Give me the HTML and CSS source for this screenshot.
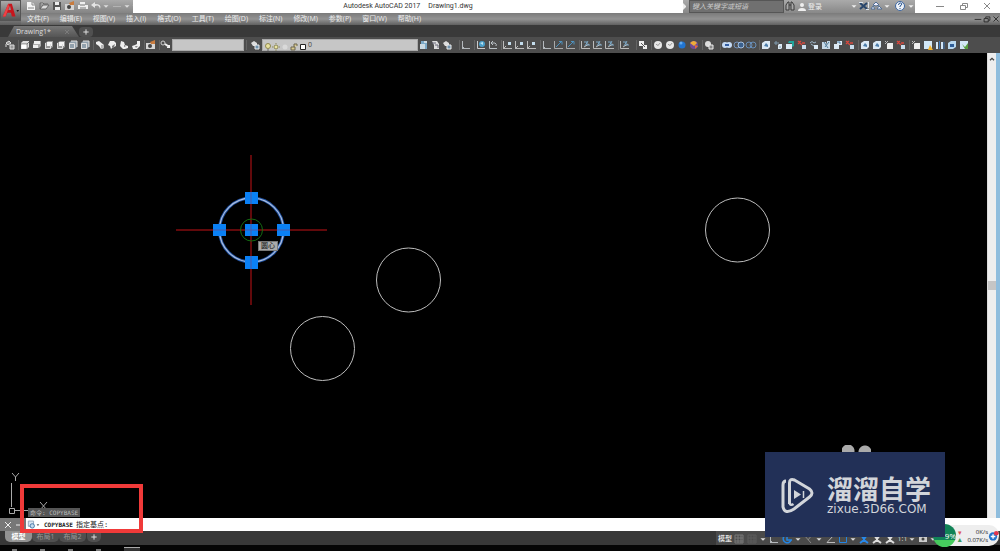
FILE: index.html
```html
<!DOCTYPE html>
<html lang="zh-CN">
<head>
<meta charset="utf-8">
<title>Autodesk AutoCAD 2017 Drawing1.dwg</title>
<link rel="stylesheet" href="styles.css">
</head>
<body>
<svg class="defs" aria-hidden="true">
  <symbol id="named" viewBox="0 0 12 12"><path d="M2 4l3-2 2 2-3 2zM2 5v3M6 6h4v4H6z" fill="#999" stroke="#ddd"/></symbol>
  <symbol id="boxtop" viewBox="0 0 12 12"><path d="M2 4l2-2h6v6l-2 2H2z" fill="#ddd"/><path d="M2 5h6v5M8 5l2-2" stroke="#777" fill="none"/><path d="M2.500 5.500h5v4h-5z" fill="#fff"/></symbol>
  <symbol id="boxopen" viewBox="0 0 12 12"><path d="M2 5l2-3h6v5L8 9H2z" fill="#aaa"/><path d="M3 2h6v3H3zM2 6h5v3H2z" fill="#eee"/></symbol>
  <symbol id="boxside" viewBox="0 0 12 12"><path d="M2 4l3-2h5v6l-3 2H2z" fill="#999"/><path d="M4 3h5v4H4z" fill="#f4f4f4"/><path d="M2.500 4v5.500h5V5" stroke="#ddd" fill="none"/></symbol>
  <symbol id="boxback" viewBox="0 0 12 12"><path d="M2 4l2-2h6v6l-2 2H2z" fill="#91a0ac"/><path d="M2.500 4.500h5v5h-5zM4 2h6v6" stroke="#ddd" fill="none"/></symbol>
  <symbol id="iso1" viewBox="0 0 12 12"><path d="M2 3l3-1 5 4v3l-3 1-2-3-3-2z" fill="#eee"/><path d="M7 6l3 0v3l-3 1z" fill="#b5b5b5"/></symbol>
  <symbol id="iso2" viewBox="0 0 12 12"><path d="M2 6l2-4 4 0 2 2v3l-4 2-1 1-1-3z" fill="#eee"/><path d="M6 7l3-2-1 3-2 1z" fill="#777"/></symbol>
  <symbol id="iso3" viewBox="0 0 12 12"><path d="M3 2l3 1 1 3 3 1v2L7 10H5L2 7z" fill="#eee"/><path d="M6 6l2 1-2 1z" fill="#777"/></symbol>
  <symbol id="iso4" viewBox="0 0 12 12"><path d="M7 2h3v5l-3 3H3L2 7l3-1 2-1z" fill="#eee"/><path d="M5 7h3L6 9z" fill="#888"/></symbol>
  <symbol id="camera" viewBox="0 0 12 12"><path d="M1 4h9v6H1z" fill="#d5d5d5"/><circle cx="5" cy="7" r="2" fill="#444"/><path d="M5 3l5-2v4H6z" fill="#c87b3e"/></symbol>
  <symbol id="key" viewBox="0 0 12 12"><circle cx="3" cy="4" r="2" fill="none" stroke="#ccc"/><path d="M5 5l3 2h2M7 8h3" stroke="#eee" stroke-width="2"/></symbol>
  <symbol id="layers" viewBox="0 0 12 12"><path d="M1 4l3-2 3 2v3H3z" fill="#ddd"/><path d="M5 6h4v4H5z" fill="#6f91ac" stroke="#eee"/></symbol>
  <symbol id="layer2" viewBox="0 0 12 12"><path d="M3 2h4l2 2v6H3z" fill="#7ba8c6"/><path d="M2 5h5v5H2zM6 2h3v2H6z" fill="#cbd9e1"/></symbol>
  <symbol id="layer3" viewBox="0 0 12 12"><path d="M2 2h5l2 3v5H4V6z" fill="#ddd"/><path d="M2 4h4M5 6h3v3" stroke="#667" fill="none"/></symbol>
  <symbol id="ucs" viewBox="0 0 12 12"><path d="M2.500 2v7.500H10M2 10l2-2" stroke="#b4b9bd" fill="none"/></symbol>
  <symbol id="ucsw" viewBox="0 0 12 12"><path d="M2.500 2v7.500H10" stroke="#ccc" fill="none"/><circle cx="7" cy="5" r="3" fill="#4a9fca"/><path d="M5 4l3-1v3z" fill="#bde2ee"/></symbol>
  <symbol id="ucsp" viewBox="0 0 12 12"><path d="M2.500 2v7.500H10M4 4h4q2 1 1 3M4 4l2-2M4 4l2 2" stroke="#bbc2c7" fill="none"/></symbol>
  <symbol id="ucsd" viewBox="0 0 12 12"><path d="M1.500 2v7.500H10M1 10l3-3" stroke="#bbb" fill="none"/><path d="M6 3h3v3H6z" fill="#c3dcec"/></symbol>
  <symbol id="ucsz" viewBox="0 0 12 12"><path d="M1.500 2v7.500H10" stroke="#aaa" fill="none"/><path d="M3 8l6-6M6 2.500h3v3" stroke="#4e91bd" fill="none"/></symbol>
  <symbol id="ucsr" viewBox="0 0 12 12"><path d="M1.500 2v7.500H10M4 8l5-3" stroke="#bbb" fill="none"/><path d="M4 3h3v3h3M8 2l-3 5" stroke="#7ba6c4" fill="none"/></symbol>
  <symbol id="squares" viewBox="0 0 12 12"><path d="M2 2h5v5H2zM6 6h4v4H6z" fill="#eee"/><path d="M4 4l4 4M7 3l2 2" stroke="#555"/></symbol>
  <symbol id="sphere" viewBox="0 0 12 12"><circle cx="6" cy="6" r="4" fill="#e8e8e8"/><path d="M4 5q2 3 4-1" stroke="#999" fill="none"/></symbol>
  <symbol id="bsphere" viewBox="0 0 12 12"><circle cx="6" cy="6" r="3.500" fill="#2175d1"/><circle cx="5" cy="4" r="1.500" fill="#62aaf0"/></symbol>
  <symbol id="csphere" viewBox="0 0 12 12"><circle cx="6" cy="6" r="4" fill="#704b98"/><path d="M2 4q4-4 7 0L6 7z" fill="#efad38"/><path d="M7 6l3 1-3 3z" fill="#e56c36"/></symbol>
  <symbol id="vs" viewBox="0 0 12 12"><circle cx="5" cy="5" r="3" fill="#ddd"/><path d="M6 6h4v4H6z" fill="#888" stroke="#eee"/></symbol>
  <symbol id="union" viewBox="0 0 12 12"><circle cx="4" cy="6" r="3" fill="#c5dbf6"/><circle cx="8" cy="6" r="3" fill="#c5dbf6"/><path d="M4 6h4" stroke="#345ea2" stroke-width="2"/></symbol>
  <symbol id="subtract" viewBox="0 0 12 12"><circle cx="4" cy="6" r="3" fill="none" stroke="#7292bd"/><circle cx="8" cy="6" r="3" fill="#3a608d" stroke="#a7c0de"/></symbol>
  <symbol id="intersect" viewBox="0 0 12 12"><circle cx="4" cy="6" r="3" fill="none" stroke="#688eb8"/><circle cx="8" cy="6" r="3" fill="none" stroke="#688eb8"/></symbol>
  <symbol id="solid" viewBox="0 0 12 12"><path d="M2 4l3-2h5v6l-2 2H2z" fill="#dceaf5"/><path d="M4 7l2-3 2 2v2z" fill="#4e7fac"/></symbol>
  <symbol id="move" viewBox="0 0 12 12"><path d="M6 6l1-1h3v4l-1 1H6z" fill="#dceaf5"/><path d="M2 4h5M4 2v4M7 8h2" stroke="#809cb0"/></symbol>
  <symbol id="teal" viewBox="0 0 12 12"><path d="M2 5h6v5H2z" fill="#dceaf5"/><path d="M5 2h5v5L8 8V4H4z" fill="#21a69c"/></symbol>
  <symbol id="redface" viewBox="0 0 12 12"><path d="M6 6h4v4H6z" fill="#c8dcec"/><path d="M2 2l4 4M5 2L2 5M6 4h3" stroke="#d8483e" stroke-width="1.300"/></symbol>
  <symbol id="rotate" viewBox="0 0 12 12"><path d="M6 6h4v4H6z" fill="#dceaf5"/><path d="M2 4q2-3 4 0l2-1M3 5l3 2" stroke="#9db7c9" fill="none"/></symbol>
  <symbol id="taper" viewBox="0 0 12 12"><path d="M2 3h4l1 3V2h3v8H2z" fill="#c9dbe8"/><path d="M4 3l4 6M5 8l4-5" stroke="#537e9d"/></symbol>
  <symbol id="copy" viewBox="0 0 12 12"><path d="M5 2h5v4H5zM2 5h5v5H2z" fill="#dceaf5"/><path d="M5 3h3v2" stroke="#47799f" fill="none"/></symbol>
  <symbol id="imprint" viewBox="0 0 12 12"><path d="M4 4h6v6H4z" fill="#eee"/><path d="M2 2l3 3M2 5l3-3" stroke="#bbb"/></symbol>
  <symbol id="warning" viewBox="0 0 12 12"><path d="M2 2h8v8H2z" fill="#d3e8f7"/><path d="M8 6l3 5H6z" fill="#f2b22d"/></symbol>
  <symbol id="split" viewBox="0 0 12 12"><path d="M2 3h2v7H2zM7 3h2v7H7z" fill="#d2e6f6"/><path d="M5.500 2v8M10 3v7" stroke="#3f76b3"/></symbol>
  <symbol id="shell" viewBox="0 0 12 12"><path d="M2 4l3-2h5v6l-3 2H2z" fill="#b8d8ef"/><path d="M4 5h4v3H4z" fill="#2f5e98"/></symbol>
  <symbol id="check" viewBox="0 0 12 12"><path d="M2 2h8v8H2z" fill="#d3e8f7"/><path d="M4 5l3 3 3-4v6H7z" fill="#579f3f"/></symbol>
  <symbol id="new" viewBox="0 0 12 12"><path d="M2 2h5l3 3v5H2z" fill="#f5f5f5"/><path d="M7 2v3h3M3 8h6" stroke="#888" fill="none"/></symbol>
  <symbol id="open" viewBox="0 0 12 12"><path d="M2 3h3l1 1h4M2 3v6h6l3-4H5L2 9" fill="#ddd" stroke="#666"/></symbol>
  <symbol id="save" viewBox="0 0 12 12"><path d="M2 2h8v8H2z" fill="#555"/><path d="M4 2h4v3H4zM4 7h5v3H4z" fill="#eee"/></symbol>
  <symbol id="print" viewBox="0 0 12 12"><path d="M3 2h5v3h3v4H1V5h2z" fill="#eee"/><path d="M3 5h5M3 8h6" stroke="#777"/></symbol>
  <symbol id="undo" viewBox="0 0 12 12"><path d="M5 2L1 5l4 3V6q4-2 5 3 2-5-5-5z" fill="#e4e4e4"/></symbol>
  <symbol id="minus" viewBox="0 0 12 12"><path d="M2 6.500h8" stroke="currentColor"/></symbol>
  <symbol id="restore" viewBox="0 0 12 12"><path d="M2.500 5.500h5v4h-5zM4.500 5V3.500h5v4H8" stroke="currentColor" fill="none"/></symbol>
  <symbol id="close" viewBox="0 0 12 12"><path d="M3 3l6 6M9 3l-6 6" stroke="currentColor"/></symbol>
  <symbol id="plus" viewBox="0 0 12 12"><path d="M6 2v8M2 6h8" stroke="currentColor" stroke-width="1.500"/></symbol>
  <symbol id="wrench" viewBox="0 0 12 12"><path d="M2 6h5M7 3l3 3-3 3z" stroke="currentColor" fill="currentColor"/></symbol>
  <symbol id="down" viewBox="0 0 12 12"><path d="M3 5h6L6 8z" fill="currentColor"/></symbol>
  <symbol id="binoc" viewBox="0 0 12 12"><path d="M2 10V5l2-3h1v8zM7 10V2h1l2 3v5zM5 5h2" stroke="#3b3b3b" fill="#aaa"/></symbol>
  <symbol id="user" viewBox="0 0 12 12"><circle cx="6" cy="4" r="2" fill="#eee"/><path d="M2 10q0-3 4-3t4 3z" fill="#eee"/></symbol>
  <symbol id="exch" viewBox="0 0 12 12"><path d="M2 3l7 6M9 3L2 9" stroke="#27456c" stroke-width="2"/><path d="M1 2.500h4M8 9.500h3M10.500 2v6" stroke="#dce4ed"/></symbol>
  <symbol id="a360" viewBox="0 0 12 12"><path d="M6 2l3 3-3 1-3-1zM1 9l2-3 2 3zM7 9l2-3 3 3z" fill="#eef" stroke="#506f94"/></symbol>
  <symbol id="help" viewBox="0 0 12 12"><circle cx="6" cy="6" r="4.500" fill="#eef2f8" stroke="#3d66a0"/><path d="M4.500 5q0-2 2-2t1 2L6 6v1M6 8v1" stroke="#29558e" fill="none"/></symbol>
  <symbol id="grid" viewBox="0 0 12 12"><path d="M2 2h8v8H2zM5 2v8M8 2v8M2 5h8M2 8h8" stroke="#797979" fill="none"/></symbol>
  <symbol id="polar" viewBox="0 0 12 12"><path d="M9 3a4 4 0 1 0 1 4M6 2v5h5" stroke="#2385e4" stroke-width="1.500" fill="none"/></symbol>
  <symbol id="angle" viewBox="0 0 12 12"><path d="M10 2L3 9.500h8" stroke="#bbb" fill="none"/></symbol>
  <symbol id="iso" viewBox="0 0 12 12"><path d="M2 2l7 8M6 7l4-5" stroke="#888"/></symbol>
  <symbol id="osnap" viewBox="0 0 12 12"><path d="M2.500 3.500h7v6h-7z" stroke="#2385e4" fill="none"/></symbol>
  <symbol id="person" viewBox="0 0 12 12"><path d="M3 2l3 4 3-4M6 5v2l4 3M6 7l-4 3" stroke="currentColor" stroke-width="2" fill="none"/></symbol>
  <symbol id="gear" viewBox="0 0 12 12"><path d="M2 3h8v6H2z" fill="#ccc"/><circle cx="6" cy="6" r="1.500" fill="#444"/></symbol>
</svg>

<div class="app">
  <header class="top">
    <button class="logo" aria-label="AutoCAD"><svg viewBox="0 0 21 20"><path d="M2 16L8 2h4l4 14h-4l-1-4H7l-2 4z" fill="#c6161d"/><path d="M8 9l2-5 1 5z" fill="#8a8a8a"/><path d="M2 16l6-14 1 3-4 11z" fill="#ee4246"/><path d="M17 9h3l-1.500 2z" fill="#222"/></svg></button>
    <div class="topright">
      <div class="titlebar">
        <div class="quick">
          <button class="t" aria-label="新建"><svg><use href="#new"/></svg></button>
          <button class="t" aria-label="打开"><svg><use href="#open"/></svg></button>
          <button class="t" aria-label="保存"><svg><use href="#save"/></svg></button>
          <button class="t" aria-label="另存为"><svg><use href="#camera"/></svg></button>
          <button class="t" aria-label="打印"><svg><use href="#print"/></svg></button>
          <button class="t" aria-label="放弃"><svg><use href="#undo"/></svg></button>
          <button class="n" aria-label="放弃列表"><svg><use href="#down"/></svg></button>
          <button class="t faint" aria-label="重做"><svg><use href="#minus"/></svg></button>
          <button class="n" aria-label="重做列表"><svg><use href="#down"/></svg></button>
          <button class="n" aria-label="自定义"><svg><use href="#down"/></svg></button>
        </div>
        <h1><span>Autodesk AutoCAD 2017</span><span>Drawing1.dwg</span></h1>
        <div class="info">
          <span class="handle"></span>
          <input class="search" aria-label="搜索" placeholder="键入关键字或短语">
          <button class="t" aria-label="查找"><svg><use href="#binoc"/></svg></button>
          <button class="login"><svg><use href="#user"/></svg>登录</button>
          <button class="n" aria-label="账户"><svg><use href="#down"/></svg></button>
          <button class="t" aria-label="Exchange"><svg><use href="#exch"/></svg></button>
          <button class="t" aria-label="A360"><svg><use href="#a360"/></svg></button>
          <button class="n" aria-label="连接"><svg><use href="#down"/></svg></button>
          <button class="t helpbtn" aria-label="帮助"><svg><use href="#help"/></svg></button>
          <button class="n" aria-label="帮助菜单"><svg><use href="#down"/></svg></button>
        </div>
        <div class="win">
          <button class="t" aria-label="最小化"><svg><use href="#minus"/></svg></button>
          <button class="t" aria-label="还原"><svg><use href="#restore"/></svg></button>
          <button class="t" aria-label="关闭"><svg><use href="#close"/></svg></button>
        </div>
      </div>
      <nav class="menu">
        <button>文件(F)</button><button>编辑(E)</button><button>视图(V)</button><button>插入(I)</button><button>格式(O)</button><button>工具(T)</button><button>绘图(D)</button><button>标注(N)</button><button>修改(M)</button><button>参数(P)</button><button>窗口(W)</button><button>帮助(H)</button>
        <span class="docwin">
          <button class="n" aria-label="最小化图形"><svg><use href="#minus"/></svg></button>
          <button class="n" aria-label="还原图形"><svg><use href="#restore"/></svg></button>
          <button class="n" aria-label="关闭图形"><svg><use href="#close"/></svg></button>
        </span>
      </nav>
    </div>
  </header>

  <div class="tabs">
    <button class="filetab">Drawing1*<svg><use href="#close"/></svg></button>
    <button class="addtab" aria-label="新图形"><svg><use href="#plus"/></svg></button>
  </div>

  <div class="tools">
    <div class="g"><button class="t" aria-label="命名视图"><svg><use href="#named"/></svg></button></div>
    <div class="g">
      <button class="t" aria-label="俯视"><svg><use href="#boxtop"/></svg></button><button class="t" aria-label="仰视"><svg><use href="#boxopen"/></svg></button><button class="t" aria-label="左视"><svg><use href="#boxside"/></svg></button><button class="t" aria-label="右视"><svg><use href="#boxside"/></svg></button><button class="t" aria-label="前视"><svg><use href="#boxback"/></svg></button><button class="t" aria-label="后视"><svg><use href="#boxback"/></svg></button>
    </div>
    <div class="g">
      <button class="t" aria-label="西南等轴测"><svg><use href="#iso1"/></svg></button><button class="t" aria-label="东南等轴测"><svg><use href="#iso2"/></svg></button><button class="t" aria-label="东北等轴测"><svg><use href="#iso3"/></svg></button><button class="t" aria-label="西北等轴测"><svg><use href="#iso4"/></svg></button>
    </div>
    <div class="g"><button class="t" aria-label="相机"><svg><use href="#camera"/></svg></button></div>
    <div class="g"><button class="t" aria-label="视图管理"><svg><use href="#key"/></svg></button><select class="viewsel" aria-label="视图"><option></option></select></div>
    <div class="g layer">
      <button class="t" aria-label="图层特性"><svg><use href="#layers"/></svg></button>
      <label class="layerbox">
        <select aria-label="图层"><option>0</option></select>
        <svg class="layericons" viewBox="0 0 44 12"><circle cx="5" cy="5" r="2.500" fill="#e8e2a0" stroke="#8e8750"/><path d="M4 9h2" stroke="#666"/><circle cx="13" cy="6" r="2" fill="#ece6a2" stroke="#8c875c"/><path d="M13 2v1M13 9v1M9 6h1M16 6h1" stroke="#8c875c"/><circle cx="22" cy="6" r="2.500" fill="#d9d9d9"/><path d="M28 6h4v3h-4zM31 6V3h3v2" fill="#d8c98d" stroke="#6c6650"/><path d="M37.500 3.500h5v5h-5z" fill="#fff" stroke="#222"/></svg>
      </label>
      <button class="t" aria-label="置为当前"><svg><use href="#layer2"/></svg></button><button class="t" aria-label="上一个图层"><svg><use href="#layer3"/></svg></button><button class="t" aria-label="图层状态"><svg><use href="#layers"/></svg></button>
    </div>
    <div class="g"><button class="t" aria-label="UCS"><svg><use href="#ucs"/></svg></button></div>
    <div class="g"><button class="t" aria-label="世界"><svg><use href="#ucsw"/></svg></button><button class="t" aria-label="上一个UCS"><svg><use href="#ucsp"/></svg></button></div>
    <div class="g"><button class="t" aria-label="面UCS"><svg><use href="#ucsd"/></svg></button><button class="t" aria-label="对象UCS"><svg><use href="#ucsd"/></svg></button><button class="t" aria-label="视图UCS"><svg><use href="#ucsd"/></svg></button></div>
    <div class="g"><button class="t" aria-label="原点"><svg><use href="#ucs"/></svg></button><button class="t" aria-label="Z轴矢量"><svg><use href="#ucsz"/></svg></button><button class="t" aria-label="三点"><svg><use href="#ucsz"/></svg></button></div>
    <div class="g"><button class="t" aria-label="X"><svg><use href="#ucsr"/></svg></button><button class="t" aria-label="Y"><svg><use href="#ucsr"/></svg></button><button class="t" aria-label="Z"><svg><use href="#ucsr"/></svg></button></div>
    <div class="g"><button class="t" aria-label="应用"><svg><use href="#ucsr"/></svg></button></div>
    <div class="g bar"><button class="t" aria-label="二维线框"><svg><use href="#squares"/></svg></button></div>
    <div class="g"><button class="t" aria-label="三维线框"><svg><use href="#sphere"/></svg></button><button class="t" aria-label="三维隐藏"><svg><use href="#sphere"/></svg></button><button class="t" aria-label="真实"><svg><use href="#bsphere"/></svg></button><button class="t" aria-label="概念"><svg><use href="#csphere"/></svg></button></div>
    <div class="g"><button class="t" aria-label="视觉样式"><svg><use href="#vs"/></svg></button></div>
    <div class="g bar"><button class="t" aria-label="并集"><svg><use href="#union"/></svg></button><button class="t" aria-label="差集"><svg><use href="#subtract"/></svg></button><button class="t" aria-label="交集"><svg><use href="#intersect"/></svg></button></div>
    <div class="g"><button class="t" aria-label="拉伸面"><svg><use href="#solid"/></svg></button><button class="t" aria-label="移动面"><svg><use href="#move"/></svg></button><button class="t" aria-label="偏移面"><svg><use href="#teal"/></svg></button><button class="t" aria-label="删除面"><svg><use href="#redface"/></svg></button><button class="t" aria-label="旋转面"><svg><use href="#rotate"/></svg></button><button class="t" aria-label="倾斜面"><svg><use href="#taper"/></svg></button><button class="t" aria-label="复制面"><svg><use href="#copy"/></svg></button><button class="t" aria-label="着色面"><svg><use href="#redface"/></svg></button></div>
    <div class="g"><button class="t" aria-label="复制边"><svg><use href="#solid"/></svg></button><button class="t" aria-label="着色边"><svg><use href="#solid"/></svg></button><button class="t" aria-label="压印"><svg><use href="#imprint"/></svg></button><button class="t" aria-label="清除"><svg><use href="#redface"/></svg></button></div>
    <div class="g"><button class="t" aria-label="分割"><svg><use href="#imprint"/></svg></button><button class="t" aria-label="警告"><svg><use href="#warning"/></svg></button><button class="t" aria-label="分开"><svg><use href="#split"/></svg></button><button class="t" aria-label="抽壳"><svg><use href="#shell"/></svg></button><button class="t" aria-label="检查"><svg><use href="#check"/></svg></button></div>
  </div>

  <main class="canvas">
    <svg class="drawing" role="img" aria-label="图形">
      <g fill="none" stroke="#bdbdbd"><circle cx="408.500" cy="227" r="32"/><circle cx="322.500" cy="295.500" r="32"/><circle cx="737.500" cy="177" r="32"/></g>
      <circle cx="251.500" cy="177" r="32" fill="none" stroke="#1d4f9f" stroke-width="3"/>
      <circle cx="251.500" cy="177" r="32" fill="none" stroke="#a9bbdc" stroke-width="1.300"/>
      <path d="M176 177h151M251 102v150" stroke="#c41216"/>
      <circle cx="251.500" cy="177" r="11" fill="none" stroke="#146b12"/>
      <g fill="#0a80f5"><path d="M245 139h13v12h-13zM213 171h13v12h-13zM245 171h13v12h-13zM277 171h13v12h-13zM245 203h13v13h-13z"/></g>
      <path d="M213 177h13M245 177h13M277 177h13M251 139v12M251 171v12M251 203v13" stroke="#4a5aa5"/>
    </svg>
    <span class="snap">圆心</span>
    <svg class="axes" viewBox="0 0 44 44" aria-hidden="true"><path d="M11.500 11v24M14 38.500h29M9.500 36.500h5v5h-5z" stroke="#aaa" fill="none"/><path d="M12 1l3.500 4L19 1M15.500 5v4M40 30l7 8M47 30l-7 8" stroke="#aaa" fill="none"/></svg>
    <div class="scroll"><button aria-label="向上滚动"><svg viewBox="0 0 12 12"><path d="M3 8l3-3 3 3" stroke="#444" stroke-width="2" fill="none"/></svg></button><span class="thumb"></span></div>
    <span class="history">命令: COPYBASE</span>
  </main>

  <div class="command">
    <button class="t" aria-label="关闭命令行"><svg><use href="#close"/></svg></button>
    <button class="t" aria-label="自定义命令行"><svg><use href="#wrench"/></svg></button>
    <label class="prompt"><svg viewBox="0 0 16 12"><path d="M1.500 1.500h6v6h-6z" fill="#d7e4f0" stroke="#8ba2b8"/><circle cx="6" cy="7" r="2.500" fill="#c5dced" stroke="#3a6fa3"/><path d="M11 5h3l-1.500 2z" fill="#555"/></svg>
      <b>COPYBASE</b><span>指定基点:</span><input aria-label="命令输入"></label>
  </div>

  <footer class="status">
    <div class="layouts"><button class="on">模型</button><button>布局1</button><button>布局2</button><button class="add" aria-label="新建布局"><svg><use href="#plus"/></svg></button></div>
    <div class="modes">
      <button class="model">模型</button>
      <button class="t" aria-label="栅格"><svg><use href="#grid"/></svg></button><button class="t faint" aria-label="捕捉"><svg><use href="#grid"/></svg></button><button class="n" aria-label="捕捉设置"><svg><use href="#down"/></svg></button>
      <button class="t" aria-label="正交"><svg><use href="#ucs"/></svg></button><button class="t" aria-label="极轴"><svg><use href="#polar"/></svg></button><button class="n" aria-label="极轴设置"><svg><use href="#down"/></svg></button>
      <button class="t" aria-label="等轴测"><svg><use href="#iso"/></svg></button><button class="n" aria-label="等轴测设置"><svg><use href="#down"/></svg></button>
      <button class="t" aria-label="追踪"><svg><use href="#angle"/></svg></button><button class="t" aria-label="对象捕捉"><svg><use href="#osnap"/></svg></button><button class="n" aria-label="对象捕捉设置"><svg><use href="#down"/></svg></button>
      <button class="t blue" aria-label="注释可见性"><svg><use href="#person"/></svg></button><button class="t" aria-label="自动缩放"><svg><use href="#person"/></svg></button><button class="t" aria-label="注释比例"><svg><use href="#person"/></svg></button>
      <button class="scale">1:1</button><button class="n" aria-label="比例列表"><svg><use href="#down"/></svg></button>
      <button class="t" aria-label="工作空间"><svg><use href="#gear"/></svg></button><button class="n" aria-label="工作空间列表"><svg><use href="#down"/></svg></button>
    </div>
  </footer>
  <div class="taskbar"><i></i><i></i><i></i><i></i><i class="active"></i></div>

  <div class="highlight"></div>
  <div class="netmeter"><span class="ball">9%</span><span class="arrows"><i>▾</i><b>▴</b></span><span class="rates"><span>0K/s</span><span>0.07K/s</span></span><svg viewBox="0 0 12 12"><circle cx="5.500" cy="6.500" r="4.500" fill="#2274cf"/><path d="M5.500 4v5M3 6.500h5" stroke="#fff" stroke-width="1.500"/><circle cx="9" cy="3" r="2.500" fill="#e2374e"/></svg></div>
  <div class="brand">
    <span class="ears"></span>
    <svg viewBox="0 0 36 38" aria-hidden="true"><path d="M9.500 28V7q0-5 5-3l15 9q5 4 0 8L14 33q-9 6-11-2V9q0-4 3-4" fill="none" stroke="#d2d5da" stroke-width="3"/><path d="M9.500 8v19q1 3 4 1" fill="none" stroke="#d2d5da" stroke-width="2.500"/><path d="M14 14l7 4.500-7 4.500z" fill="#d2d5da"/><path d="M23.500 15v7" stroke="#d2d5da" stroke-width="1.500"/></svg>
    <div class="brandtext"><strong>溜溜自学</strong><span>zixue.3D66.COM</span></div>
  </div>
</div>
</body>
</html>
```
FILE: styles.css
```css
* { box-sizing: border-box; }
body { margin: 0; background: #000; font-family: "Open Sans", "Noto Sans CJK SC", sans-serif; font-size: 7px; line-height: 10px; }
button, input, select { font: inherit; color: inherit; margin: 0; padding: 0; border: 0; background: none; border-radius: 0; }
button { display: flex; align-items: center; justify-content: center; white-space: nowrap; }
.defs { position: absolute; width: 0; height: 0; }
.app { position: relative; display: flex; flex-direction: column; height: 100vh; overflow: hidden; }
.t, .t svg { width: 12px; height: 12px; flex: none; }
.n { width: 9px; height: 12px; flex: none; }
.n svg { width: 10px; height: 10px; flex: none; }
.faint { opacity: .4; }

.top { display: flex; background: linear-gradient(#777, #929292 60%, #5d5d5d); }
.logo { width: 21px; align-self: flex-start; background: linear-gradient(#aaa, #555); border: 1px solid #555; height: 21px; }
.logo svg { width: 20px; height: 20px; }
.topright { flex: 1; min-width: 0; }
.titlebar { display: flex; align-items: stretch; height: 13px; background: #fff; }
.quick { display: flex; width: 112px; padding-left: 3px; background: linear-gradient(#aaa, #848484); color: #ddd; overflow: hidden; }
.quick .n { width: 8px; }
.quick .t { width: 13px; }
.titlebar h1 { flex: 1; display: flex; justify-content: center; gap: 8px; margin: 0; color: #333; font: 400 7px/12px Roboto, sans-serif; white-space: nowrap; }
.info { display: flex; width: 232px; background: linear-gradient(#aaa, #888); color: #eee; }
.handle { width: 6px; margin: 3px 0; border: 3px solid transparent; border-left-color: #eee; }
.search { width: 95px; padding-left: 2px; background: #707070; border: 1px solid #565656; font-style: italic; }
.search::placeholder { color: #ccc; }
.login svg { width: 12px; height: 12px; }
.login + .n { margin-left: auto; }
.helpbtn { margin-left: 3px; }
.win { display: flex; justify-content: space-between; width: 85px; padding: 0 7px 0 19px; color: #888; }
.menu { display: flex; gap: 11px; height: 12px; padding-left: 6px; background: linear-gradient(#7b7b7b, #939393 50%, #606060); color: #eee; }
.docwin { display: flex; margin-left: auto; color: #222; }

.tabs { display: flex; align-items: flex-end; height: 12px; background: #393939; padding-left: 8px; color: #ddd; }
.filetab { justify-content: space-between; width: 71px; height: 11px; padding: 0 8px; background: linear-gradient(#777, #555); clip-path: polygon(6px 0, 64px 0, 100% 100%, 0 100%); }
.filetab svg { width: 8px; height: 8px; color: #888; }
.addtab { width: 14px; height: 10px; background: #505050; border-radius: 4px; }
.addtab svg { width: 8px; height: 8px; }

.tools { display: flex; align-items: center; gap: 3px; height: 16px; padding-left: 4px; background: #4d4d4d; overflow: hidden; }
.g { display: flex; align-items: center; flex: none; }
.g + .g { box-shadow: -2px 0 0 -1px #636363; }
.g + .bar { margin-left: 3px; }
.tools select { appearance: none; height: 12px; background: #c6c6c6; border: 1px solid #aaa; color: #444; }
.viewsel { width: 72px; }
.layer { padding: 0 3px; }
.layerbox { position: relative; }
.layerbox select { width: 156px; padding-left: 45px; }
.layericons { position: absolute; left: 1px; top: 2px; width: 44px; height: 12px; }

.canvas { position: relative; flex: 1; min-height: 0; background: #000; }
.drawing { position: absolute; inset: 0; width: 100%; height: 100%; }
.snap { position: absolute; left: 258px; top: 188px; padding: 0 2px; height: 10px; background: #aaa; border: 1px solid #777; color: #111; line-height: 8px; }
.axes { position: absolute; left: 0; bottom: 2px; width: 44px; height: 44px; overflow: visible; }
.scroll { position: absolute; right: 0; top: 0; bottom: 0; width: 13px; background: #eee; border-right: 4px solid #8fbddd; border-left: 1px solid #ddd; }
.scroll button { width: 8px; height: 12px; }
.scroll svg { width: 8px; height: 8px; }
.thumb { position: absolute; left: 0; top: 49%; width: 8px; height: 9px; background: #c5c5c5; }
.history { position: absolute; left: 28px; bottom: 1px; padding: 0 2px; background: #555; color: #bbb; font: 6px/9px "DejaVu Sans Mono", "Noto Sans CJK SC", monospace; }

.command { display: flex; align-items: center; height: 13px; background: #777; color: #eee; padding-left: 2px; }
.prompt { flex: 1; display: flex; align-items: center; gap: 3px; height: 13px; padding-left: 1px; background: #fff; color: #222; font: 7px/12px "DejaVu Sans Mono", "Noto Sans CJK SC", monospace; }
.prompt b { font-size: 6px; }
.prompt svg { width: 14px; height: 12px; }
.prompt input { flex: 1; outline: 0; }

.status { display: flex; justify-content: space-between; height: 14px; padding-right: 63px; background: #383838; color: #ddd; }
.layouts { display: flex; height: 11px; padding-left: 5px; }
.layouts button { width: 27px; background: #505050; color: #999; border-radius: 0 0 5px 5px; }
.layouts .on { background: #929292; color: #fff; font-weight: 700; }
.layouts .add { width: 14px; color: #ddd; margin-left: 1px; }
.layouts svg { width: 8px; height: 8px; }
.modes { display: flex; align-items: center; width: 221px; padding: 1px 0 0 2px; justify-content: space-between; background: #4a4a4a; }
.modes .n { width: 7px; }
.model { font-weight: 700; }
.blue { color: #2789ec; }
.taskbar { display: flex; align-items: flex-end; gap: 23px; height: 6px; padding-left: 12px; background: #050505; }
.taskbar i { width: 5px; height: 2px; background: #777; }
.taskbar .active { width: 16px; height: 4px; border-top: 1px solid #aaa; background: #333; }

.highlight { position: absolute; left: 20px; bottom: 18px; width: 123px; height: 49px; border: 4px solid #f03a39; }
.netmeter { position: absolute; right: 1px; bottom: 5px; display: flex; align-items: center; width: 64px; height: 21px; border-radius: 10px; background: #eee; color: #222; }
.ball { width: 23px; height: 23px; margin-left: -2px; border-radius: 12px; background: linear-gradient(#118357 70%, #46ca5d 70%); color: #fff; font-size: 8px; line-height: 23px; text-align: right; }
.arrows { display: flex; flex-direction: column; width: 8px; padding-left: 2px; line-height: 7px; }
.arrows i { color: #d55; font-style: normal; }
.arrows b { color: #3a9a60; }
.rates { display: flex; flex-direction: column; flex: 1; font-size: 6px; line-height: 8px; text-align: right; }
.netmeter svg { width: 11px; height: 12px; }
.brand { position: absolute; right: 55px; bottom: 14px; display: flex; align-items: center; gap: 11px; width: 180px; height: 85px; padding-left: 15px; background: #223057; color: #d2d5da; }
.brand > svg { width: 36px; height: 38px; }
.brandtext { display: flex; flex-direction: column; white-space: nowrap; }
.brandtext strong { font: 700 26px/28px "Noto Sans CJK SC", sans-serif; }
.brandtext span { font: 12px/14px "DejaVu Sans", sans-serif; }
.ears { position: absolute; left: 77px; bottom: 100%; width: 29px; height: 7px; background: radial-gradient(circle at 6px 6px, #aaa 6px, transparent 7px), radial-gradient(circle at 23px 7px, #aaa 6px, transparent 7px); }
```
